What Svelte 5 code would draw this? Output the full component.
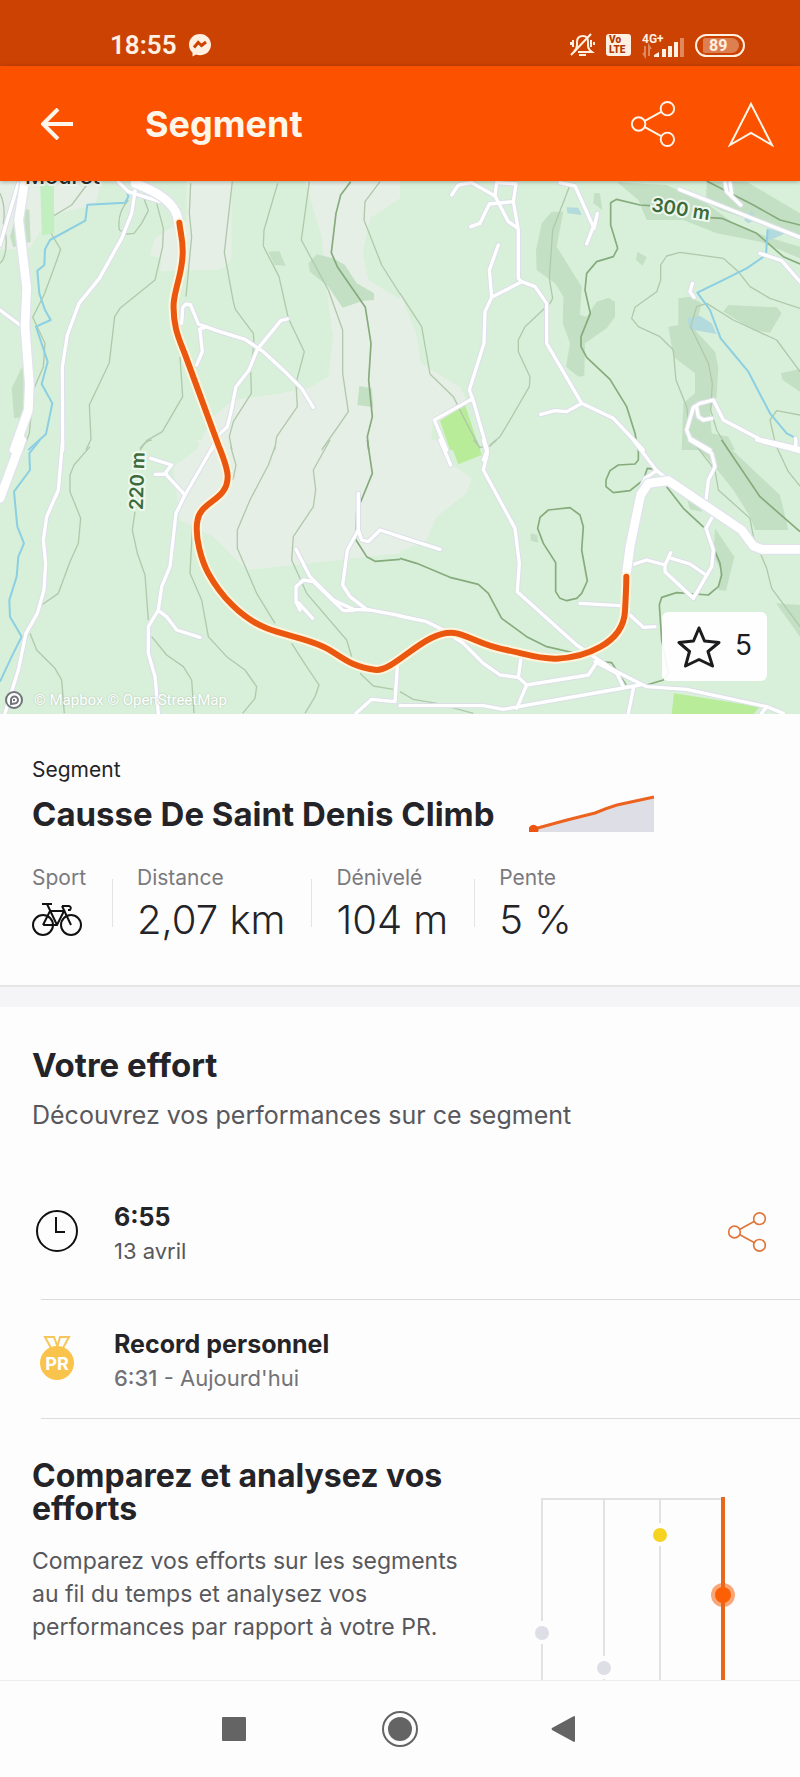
<script lang="ts">
  interface Tile {
    x: number;
    y: number;
    open: string;
    wood: string;
    park: string;
    contour: string;
    index: string;
    lake: string;
    river: string;
    road: string;
    main: string;
  }

  // The map is 2400 x 1599 units, cut in four tiles that overlap a little.
  const tiles: Tile[] = [
    {
      x: 0,
      y: -33,
      open: 'M0 30H305L285 105 150 135 90 235 0 240ZM560 30H695V250Q690 300 640 300L480 303 485 265 450 255 465 205 500 180 560 150ZM915 30H1200V85L1110 145 1088 250 1105 330 1200 388V840H590L640 740 700 690 830 672 930 652 985 620 1000 500 985 400 965 200Z',
      wood: 'M925 280L950 253 1000 265 1035 285 1070 340 1122 370V390L1090 392 1028 413 985 350 930 305ZM805 245L838 243 857 287 823 285ZM1078 648L1115 655 1120 712 1072 705ZM35 655L66 590 80 640 75 740 42 745ZM55 110L88 120 92 215 40 232 30 200Z',
      park: '',
      contour: 'M260 45L215 105 148 145 138 165 182 238 160 300 132 375 98 442 135 520 130 590 100 660 88 790 70 840M385 90Q350 130 358 180L380 192 402 190 425 160 445 122 430 80M470 100L490 175 488 230 465 330 360 415 344 440 328 578 268 705 273 808 258 840M572 40L568 130 575 200 558 380M540 560L548 680 487 785 440 812 420 840M697 35L673 248 700 395 706 418 760 490 762 520 752 600 754 670 700 755 688 800 696 840M833 40L792 180 790 228 837 320 865 445 913 545 888 640 892 710 830 800 824 840M928 35L904 210 985 360 1028 480 1028 610 1045 725 965 840M1140 35L1095 95 1092 150 1145 285 1200 372M0 70Q18 110 10 160L18 200Q22 260 0 280',
      index: 'M1052 35L1022 75 1008 130 994 248 1012 290 1096 412 1113 520 1106 630 1117 740 1102 800 1106 840',
      lake: '',
      river: 'M375 50L385 80 375 98 262 104 256 152 150 210 135 238 133 285 112 302 118 370 135 420 152 450 108 470 143 575 125 642 157 700 138 792 85 840',
      road: 'M408 45L395 130 365 205 298 325 237 400 202 495 187 590 188 840M355 35L385 65 480 95M55 40L28 130 0 225M0 420L60 465M545 460L548 412 558 402 572 405 595 462 650 482 735 508 790 545 860 610 905 655 940 712M600 480L607 545 590 585M598 478L620 470M862 447L842 452 772 538 747 600 708 650 692 730 682 770 655 795 635 840',
      main: 'M75 30L56 150 80 355 75 470 88 640 85 720 42 840M405 40Q540 90 535 165'
    },
    {
      x: 1200,
      y: -33,
      open: 'M0 370L48 490 62 580 180 652 200 690 100 750 90 840H0Z',
      wood: 'M425 160L455 125 490 125 470 230 545 350 540 435 560 440 590 395 625 383 645 395V440L620 475 555 520 553 618 535 620 498 590 510 520 488 460 490 380 465 340 410 300 408 240ZM582 70H600L607 120 580 100ZM712 245L740 262 728 287 708 270ZM650 35L700 40 800 45 920 100 1000 160 1100 200 1200 230V265L1080 215 950 190 850 150 740 150 715 90ZM920 35H1040L1200 130V205L1050 150 960 120 918 95ZM835 385L870 380 905 400 885 480 945 545 955 590 950 680 930 720 935 790 985 800 1005 840H845L850 700 885 670V610L820 560 805 470 835 465ZM970 425L985 405 1130 412 1145 430 1110 488 1060 480ZM1142 610L1200 597V665L1148 630Z',
      park: 'M120 752L195 705 240 840H150Z',
      contour: 'M508 50L458 180 448 325 458 385 450 400 375 470 355 510V545L390 620 388 650 330 750 300 800 270 825M0 370L65 470 90 612 160 680 200 760 240 835M1200 415L1110 385 1050 350 1015 305 970 265 840 247 800 258 782 285V330L770 365 705 412 695 445 715 470 780 500 820 540 828 630 860 710 865 750M1200 605L1130 510 1000 450 920 400 890 410 872 470 925 580 937 640 932 720 950 780 985 840M1200 735L1130 722 1110 750 1125 815',
      index: 'M750 107L720 105 650 88 632 98 632 165 653 235 640 260 590 275 560 310 555 360 571 430 543 500V530L560 562 630 628 680 710 705 790 715 840M930 143L965 145 1070 190 1150 260 1200 282M920 33L1060 105 1140 150 1200 165',
      lake: 'M500 112L535 113 545 135 502 130ZM862 445L900 437 935 460 950 492 868 478ZM1032 150L1055 120 1065 150 1045 160ZM1100 175L1160 188 1100 215Z',
      river: 'M1103 180L1098 255 1040 295 960 335 892 368 930 420 962 505 1045 605 1110 730 1160 790 1185 803',
      road: 'M155 75L175 45 215 38 245 55 285 78 325 155 350 172M290 38L285 78M292 38L348 42 340 95 355 180 355 325 365 335 405 350 440 400 440 520 545 700 640 745 730 840M340 95L268 102 240 160 212 170M295 225L268 300 275 382M365 335L275 382 255 425 252 520 208 660 218 686 103 750 140 840M218 686L262 840 250 870M545 700L500 725 465 722 422 733M480 38L525 48 580 170 560 222M525 48L582 175 592 130M838 58L1200 202M975 38L980 65 1022 105M990 38L995 70M1080 250L1145 272 1200 335M877 340L870 365 882 382M1200 835L1080 808 970 750 940 690 900 700 880 712 860 780 870 805 930 840M890 712L895 740 910 750 935 745M1187 805V840',
      main: ''
    },
    {
      x: 0,
      y: 777,
      open: 'M600 20L520 80 540 240 640 290 740 390 1200 340V0H590Z',
      wood: '',
      park: '',
      contour: 'M270 20L222 75 210 105V155L242 235 235 310 210 365 175 460 125 495M90 580L110 630 165 685 185 720 193 820M405 215L397 270 412 340 435 405 445 540M420 25Q440 0 455 0M455 590L500 645 550 680 575 720 582 820M692 20L708 75 700 115 640 185 600 200 578 250 570 400 605 480 625 590 680 650 735 690 770 740 765 775 728 820M825 20L805 75 750 180 712 270V325L770 460 825 550M875 610L910 665 957 735 945 770 915 820M990 0L940 90 947 150 940 200 880 290 875 360 920 460 1040 600 1055 650M1080 700L1120 738 1180 748M80 0L60 40',
      index: 'M1102 0L1117 100 1070 215 1068 300 1100 350 1125 364 1200 358',
      lake: '',
      river: 'M120 0L88 40 90 90 42 155 52 260 72 310 55 350 50 410 28 480 30 530 65 590 35 650 0 725',
      road: 'M188 0L175 150 140 230 130 300 137 370 132 450 112 520 78 580 55 690 15 820M650 0L555 165 528 220 510 380 485 440 475 510 445 560V640L465 710 475 820M452 55L515 75 495 100 555 165M465 103L500 102M475 512L500 530 530 570 600 592M1075 160V270L1042 330 1028 435 1050 470 1100 508 1200 527M1075 270L1085 300 1105 305 1140 270 1200 290M888 328L930 410 960 440 1000 480 1060 508 1110 510M1060 512L1030 512 940 425 910 420 888 440V485L900 510M895 488L938 535M1192 680L1185 785 1115 778 1068 820',
      main: 'M65 0L0 175'
    },
    {
      x: 1200,
      y: 777,
      open: 'M0 0H110L160 75 215 115 200 160 110 230 80 300 0 335Z',
      wood: 'M860 0H965L1140 165 1165 270H1065L1050 230 1000 150 920 50ZM945 265L1003 350 978 452 955 450 962 390 940 345ZM862 182L905 190V215L870 208ZM1128 490L1200 495V590ZM392 280L412 285 415 308 392 302Z',
      park: 'M148 0H232L245 45 175 73ZM822 760L1080 800 1060 822H815Z',
      contour: 'M220 0L240 22 270 18 290 0M875 0L945 90 955 150 1050 235 1060 290 1100 385 1115 445 1200 560M1120 0L1165 95 1200 138M0 755L40 778 110 790 220 820',
      index: 'M0 355L50 370 150 412 235 433 265 460 305 535 380 590 440 620 550 645M715 25V60L705 72 655 75 630 92 618 120V140L640 158 690 152 730 120 742 85 770 88M510 203L445 210 420 232 413 265 430 310 467 368V455L480 475 500 482 530 475 545 460 562 423 545 330 550 260 540 225ZM800 140L850 205 918 268 960 370 965 405 955 440 925 465 830 458 785 472 778 495 785 600 805 700 790 720 740 735M600 665L635 668 680 738M965 0L1080 170 1200 275',
      lake: '',
      river: '',
      road: 'M250 0L262 40 250 90 345 265 358 370 352 455 530 615 640 690 740 740 860 748 1100 800 1150 820M120 0L152 75M0 290L120 328M0 528L80 545 130 570 190 610 250 670 300 705 355 712 380 735 565 705 585 675M362 660L355 712M380 735L350 805M0 797H250L310 808 720 735M700 745L685 820M585 665L650 700 670 740M1100 800L1085 820M540 490L660 497M690 525L730 562 765 560M700 373L740 360 795 375V395L880 475 935 380 940 330 918 265 940 225 918 180 925 120 945 80 935 40 870 0M812 338L795 375M805 352L870 372 918 405M700 0L770 92 800 115M770 92L735 115 720 150M1070 0L1200 35M1187 0V30',
      main: 'M680 395L690 320 722 165 745 130 805 122 1025 270 1060 318 1085 328H1200'
    }
  ];

  const bands: [keyof Tile, string][] = [
    ['open', 'open'],
    ['wood', 'wood'],
    ['park', 'park'],
    ['lake', 'lake'],
    ['contour', 'contour'],
    ['index', 'contour index'],
    ['river', 'river'],
    ['road', 'road-case'],
    ['road', 'road'],
    ['main', 'main-case'],
    ['main', 'main']
  ];

  const route =
    'M538 125C542 160 550 180 548 220C546 280 525 320 521 367C518 440 540 480 555 520L655 792C670 830 683 860 683 887C683 960 600 960 592 1020C584 1070 605 1140 625 1177C660 1240 720 1310 800 1342C860 1365 910 1370 970 1397C1020 1420 1040 1455 1130 1467C1190 1467 1280 1340 1370 1357C1420 1370 1450 1395 1520 1407C1580 1420 1620 1435 1670 1433C1750 1430 1870 1390 1875 1290C1877 1250 1879 1220 1879 1187';

  const stats = [
    { label: 'Distance', value: '2,07 km' },
    { label: 'Dénivelé', value: '104 m' },
    { label: 'Pente', value: '5 %' }
  ];

  let stars = $state(5);
  let starred = $state(false);

  function toggleStar() {
    starred = !starred;
    stars += starred ? 1 : -1;
  }
</script>

{#snippet shareIcon()}
  <svg class="share" viewBox="0 0 48 48" aria-hidden="true">
    <circle cx="9" cy="24" r="7" />
    <circle cx="39" cy="8" r="7" />
    <circle cx="39" cy="40" r="7" />
    <path d="M15 21L33 11M15 27L33 37" />
  </svg>
{/snippet}

<div class="screen">
  <div class="status">
    <span class="clock">18:55</span>
    <svg class="messenger" viewBox="0 0 24 24" aria-hidden="true">
      <path class="solid" d="M12 1C5.500 1 1 5.800 1 11.800c0 3.200 1.300 5.900 3.500 7.800v4l3.600-2c1.200.4 2.500.6 3.900.6 6.500 0 11-4.600 11-10.400S18.500 1 12 1z" />
      <path class="bolt" d="M6 14.500L10.200 9.500 13.500 12.500 18 9" />
    </svg>
    <span class="spacer"></span>
    <svg class="bell" viewBox="0 0 26 24" aria-hidden="true">
      <path d="M5 19Q8 16 8 12V9c0-4 2-6 6-6 3 0 5 2 5 6v4q0 3 4 6H9M4 7v7M2 9v3M22 7v7M25 9v3" />
      <path d="M10 22h7M2 22L22 1" />
    </svg>
    <span class="volte"><b>Vo</b><b>LTE</b></span>
    <span class="signal">
      <b>4G+</b>
      <svg viewBox="0 0 42 15" aria-hidden="true">
        <path class="dim line" d="M3 4V14L1 11M7 14V4L9 7" />
        <path class="solid" d="M12 15V13L17 10V15zM20 7h4v8h-4zM26 4h4v11h-4zM32 0h4v15h-4z" />
        <path class="dim" d="M38 -4h4v19h-4z" />
      </svg>
    </span>
    <span class="battery"><span class="level">89</span></span>
  </div>

  <header class="appbar">
    <button type="button" aria-label="Retour">
      <svg class="back" viewBox="0 0 32 32" aria-hidden="true"><path d="M32 16H2M17 1L2 16 17 31" /></svg>
    </button>
    <h1>Segment</h1>
    <button type="button" aria-label="Partager">{@render shareIcon()}</button>
    <button type="button" aria-label="Itinéraire">
      <svg class="compass" viewBox="0 0 46 48" aria-hidden="true"><path d="M23 4L44 45 23 33 2 45Z" /></svg>
    </button>
  </header>

  <section class="map">
    <svg viewBox="0 0 2400 1599" role="img" aria-label="Carte du segment">
      {#each bands as [key, name]}
        {#each tiles as tile}
          {#if tile[key]}
            <path class={name} d={`${tile[key]}`} transform={`translate(${tile.x} ${tile.y})`} />
          {/if}
        {/each}
      {/each}
      <path class="lawn" d="M120 0H162V157L126 163Z" />
      <path class="route-case" d={route} />
      <path class="route" d={route} />
      <text class="place" x="75" y="9">Mouret</text>
      <text class="height" transform="translate(1952 90) rotate(9)">300 m</text>
      <text class="height" transform="translate(428 988) rotate(-88)">220 m</text>
    </svg>
    <div class="credits">
      <svg viewBox="0 0 18 18" aria-hidden="true">
        <circle cx="9" cy="9" r="8" />
        <path d="M6 13V9a3.500 3.500 0 1 1 3.500 3.500zM9 8v2" />
      </svg>
      <span>© Mapbox © OpenStreetMap</span>
    </div>
    <button type="button" class="star" aria-pressed={starred} onclick={toggleStar}>
      <svg viewBox="0 0 44 42" aria-hidden="true">
        <path d="M22 2L27.500 15 42 16.500 31 25.500 35.500 40 22 33.500 8.500 40 12.500 25.500 2 16.500 16.500 15Z" />
      </svg>
      <span>{stars}</span>
    </button>
  </section>

  <section class="summary">
    <p class="kind">Segment</p>
    <div class="name">
      <h2>Causse De Saint Denis Climb</h2>
      <svg class="profile" viewBox="0 0 126 38" aria-hidden="true">
        <path class="ground" d="M5 34L70 18 90 10 125 2V37H5Z" />
        <path class="slope" d="M5 34L38 25 66 18Q78 13 88 10L125 2" />
        <path class="dot" d="M0 37a5 5 0 1 1 9 0z" />
      </svg>
    </div>
    <dl class="stats">
      <div>
        <dt>Sport</dt>
        <dd>
          <svg class="bike" viewBox="0 0 50 34" role="img" aria-label="Vélo">
            <circle cx="11" cy="23" r="10" />
            <circle cx="39" cy="23" r="10" />
            <path d="M11 23L18 9H32L25 23H11M10 2H20M15 2L25 23M39 23L30 4M30 4H37Q40 5 38 8H36" />
          </svg>
        </dd>
      </div>
      {#each stats as stat}
        <div>
          <dt>{stat.label}</dt>
          <dd>{stat.value}</dd>
        </div>
      {/each}
    </dl>
  </section>

  <section class="effort">
    <h2>Votre effort</h2>
    <p class="lead">Découvrez vos performances sur ce segment</p>
    <ul>
      <li>
        <svg class="icon" viewBox="0 0 50 50" aria-hidden="true">
          <circle class="face" cx="25" cy="24" r="20" />
          <path class="face" d="M24 10V25H33" />
        </svg>
        <div class="detail">
          <strong>6:55</strong>
          <span>13 avril</span>
        </div>
        <button type="button" aria-label="Partager cet effort">{@render shareIcon()}</button>
      </li>
      <li>
        <svg class="icon" viewBox="0 0 50 50" aria-hidden="true">
          <path class="ribbon" d="M13 3H22L26 14H19ZM28 3H37L31 14H25Z" />
          <circle class="medal" cx="25" cy="29" r="17" />
          <text x="25" y="36">PR</text>
        </svg>
        <div class="detail">
          <strong>Record personnel</strong>
          <span class="quiet"><b>6:31</b> - Aujourd'hui</span>
        </div>
      </li>
    </ul>
  </section>

  <section class="compare">
    <div class="copy">
      <h2>Comparez et analysez vos efforts</h2>
      <p>Comparez vos efforts sur les segments au fil du temps et analysez vos performances par rapport à votre PR.</p>
    </div>
    <svg class="chart" viewBox="0 0 202 183" aria-hidden="true">
      <path class="grid" d="M8 124V2H188M8 147V183M70 2V159M70 182V183M126 2V26M126 49V183" />
      <circle class="past" cx="8" cy="136" r="7" />
      <circle class="past" cx="70" cy="171" r="7" />
      <circle class="best" cx="126" cy="38" r="7" />
      <circle class="halo" cx="189" cy="98" r="12" />
      <path class="now" d="M189 0V183" />
      <circle class="current" cx="189" cy="98" r="8" />
    </svg>
  </section>

  <nav class="system">
    <button type="button" aria-label="Applications récentes">
      <svg viewBox="0 0 36 36" aria-hidden="true"><rect x="4" y="6" width="24" height="24" rx="1" /></svg>
    </button>
    <button type="button" aria-label="Accueil">
      <svg viewBox="0 0 36 36" aria-hidden="true">
        <circle class="ring" cx="18" cy="18" r="17" />
        <circle cx="18" cy="18" r="12" />
      </svg>
    </button>
    <button type="button" aria-label="Précédent">
      <svg viewBox="0 0 36 36" aria-hidden="true"><path d="M6 17L28 5Q29 5 29 6V30Q29 31 28 31L6 19Q5 18 6 17Z" /></svg>
    </button>
  </nav>
</div>

<style>
  :global(body) {
    margin: 0;
    background: #fdfdfd;
  }

  .screen {
    display: flex;
    flex-direction: column;
    min-height: 100vh;
    font-family: Inter, "Liberation Sans", sans-serif;
    color: #242428;
  }

  h1,
  h2,
  p,
  ul,
  dl,
  dd {
    margin: 0;
    padding: 0;
  }

  button {
    display: flex;
    align-items: center;
    justify-content: center;
    padding: 0;
    border: 0;
    background: none;
    color: inherit;
    font: inherit;
    cursor: pointer;
  }

  svg {
    display: block;
    fill: none;
    stroke: currentColor;
  }

  .status {
    display: flex;
    align-items: center;
    gap: 11px;
    box-sizing: border-box;
    height: 66px;
    padding: 24px 55px 0 110px;
    background: #cb4202;
    color: #fff0e2;
    font-family: Roboto, sans-serif;
  }

  .clock {
    font-size: 26px;
    line-height: 32px;
    font-weight: 600;
  }

  .spacer {
    flex: 1;
  }

  .solid {
    fill: currentColor;
    stroke: none;
  }

  .messenger {
    width: 24px;
  }

  .bolt {
    stroke: #cb4202;
    stroke-width: 3;
  }

  .bell {
    width: 26px;
    stroke-width: 2;
  }

  .volte {
    display: flex;
    flex-direction: column;
    box-sizing: border-box;
    width: 25px;
    height: 22px;
    padding: 1px 3px;
    border-radius: 3px;
    background: #fff0e2;
    color: #b03a04;
    font-size: 10px;
    line-height: 10px;
  }

  .volte b {
    font-weight: 900;
  }

  .signal {
    display: flex;
    flex-direction: column;
    font-size: 12px;
    line-height: 10px;
  }

  .signal b {
    height: 8px;
    font-weight: 700;
  }

  .signal svg {
    width: 42px;
    overflow: visible;
  }

  .dim {
    fill: currentColor;
    stroke: none;
    opacity: 0.4;
  }

  .line {
    fill: none;
    stroke: currentColor;
    stroke-width: 2;
  }

  .battery {
    box-sizing: border-box;
    width: 50px;
    height: 23px;
    padding: 2px 2px 2px 6px;
    border: 2px solid #fff0e2;
    border-radius: 12px;
  }

  .level {
    display: block;
    width: 36px;
    padding-left: 6px;
    box-sizing: border-box;
    border-radius: 2px 8px 8px 2px;
    background: #dd7f50;
    font-size: 16px;
    line-height: 15px;
    font-weight: 700;
  }

  .appbar {
    position: relative;
    z-index: 1;
    display: flex;
    align-items: center;
    gap: 52px;
    box-sizing: border-box;
    height: 115px;
    padding: 0 26px 0 41px;
    background: #fc5200;
    box-shadow: 0 1px 4px rgba(0, 0, 0, 0.3);
    color: #fff6ea;
  }

  .appbar h1 {
    flex: 1;
    margin-left: 20px;
    font-size: 36px;
    line-height: 44px;
    font-weight: 700;
  }

  .back {
    width: 32px;
    stroke-width: 4;
  }

  .share {
    width: 46px;
    stroke-width: 2;
  }

  .compass {
    width: 46px;
    stroke-width: 2;
  }

  .map {
    position: relative;
    background: #d8f0d9;
  }

  .map > svg {
    width: 100%;
    height: auto;
    stroke: none;
  }

  .open { fill: #e6efe6; }
  .wood { fill: #c4e0c4; }
  .park { fill: #b8ec98; }
  .lawn { fill: #c1efc0; }
  .lake { fill: #b3dbdd; }

  .contour {
    stroke: #b0c9ab;
    stroke-width: 4;
    stroke-linejoin: round;
  }

  .index {
    stroke: #86ab7c;
    stroke-width: 5;
  }

  .river {
    stroke: #8ccfe3;
    stroke-width: 6;
    stroke-linejoin: round;
  }

  .road,
  .road-case,
  .main,
  .main-case,
  .route,
  .route-case {
    stroke: #ffffff;
    stroke-width: 10;
    stroke-linejoin: round;
    stroke-linecap: round;
  }

  .road-case {
    stroke: #dcdfea;
    stroke-width: 16;
  }

  .main {
    stroke-width: 26;
  }

  .main-case {
    stroke: #e0e3ec;
    stroke-width: 34;
  }

  .route {
    stroke: #ea580f;
    stroke-width: 18;
  }

  .route-case {
    stroke: #fff4dd;
    stroke-width: 30;
  }

  .map text {
    font-weight: 500;
    stroke: #eef8ee;
    stroke-width: 12;
    paint-order: stroke;
  }

  .place {
    fill: #2c2c2c;
    font-size: 66px;
  }

  .map .height {
    fill: #3b6b3b;
    font-size: 57px;
    font-weight: 600;
  }

  .credits {
    position: absolute;
    left: 5px;
    bottom: 5px;
    display: flex;
    align-items: center;
    gap: 11px;
    color: #ffffff;
    font-family: Roboto, sans-serif;
    font-size: 15px;
    line-height: 18px;
    text-shadow: 0 0 2px #a9b8aa;
  }

  .credits svg {
    width: 18px;
    color: #70757a;
    fill: #ffffff;
    stroke-width: 2;
  }

  .star {
    position: absolute;
    right: 33px;
    bottom: 33px;
    gap: 14px;
    width: 105px;
    height: 69px;
    border-radius: 6px;
    background: rgba(255, 255, 255, 0.93);
    color: #1c1c1e;
    font-size: 28px;
    line-height: 36px;
  }

  .star span {
    padding-bottom: 4px;
  }

  .star svg {
    width: 44px;
    stroke-width: 3;
    stroke-linejoin: round;
  }

  .summary {
    padding: 42px 32px 37px;
    border-bottom: 2px solid #e6e6e6;
  }

  .kind {
    font-size: 21px;
    line-height: 28px;
  }

  .name {
    display: flex;
    align-items: center;
    gap: 34px;
  }

  h2 {
    font-size: 32px;
    line-height: 60px;
    font-weight: 700;
  }

  .name h2,
  .effort h2 {
    font-size: 33px;
  }

  .profile {
    width: 126px;
  }

  .ground {
    fill: #dedee6;
    stroke: none;
  }

  .slope {
    stroke: #ec6320;
    stroke-width: 3;
  }

  .dot {
    fill: #ec5510;
    stroke: none;
  }

  .stats {
    display: flex;
    margin-top: 20px;
  }

  .stats div {
    display: flex;
    flex-direction: column;
    margin-right: 26px;
  }

  .stats div + div {
    padding-left: 25px;
    background: linear-gradient(#e4e4e6, #e4e4e6) left 15px / 1px 48px no-repeat;
  }

  .stats dt {
    color: #7a7a7e;
    font-size: 21px;
    line-height: 28px;
  }

  .stats dd {
    font-size: 40px;
    line-height: 56px;
    font-weight: 300;
  }

  .bike {
    width: 50px;
    padding: 10px 0;
    stroke: #111111;
    stroke-width: 2;
  }

  .effort {
    padding: 28px 0 0 32px;
    border-top: 20px solid #f5f5f7;
  }

  .lead {
    color: #58585c;
    font-size: 25px;
    line-height: 40px;
  }

  .effort ul {
    margin: 30px 0 0 9px;
    padding: 0;
    list-style: none;
  }

  .effort li {
    display: flex;
    align-items: center;
    gap: 32px;
    box-sizing: border-box;
    height: 119px;
    padding-right: 33px;
    border-bottom: 1px solid #dcdcde;
  }

  .effort li:first-child {
    height: 135px;
  }

  .icon {
    width: 50px;
    margin-left: -9px;
    font-size: 18px;
    font-weight: 700;
    text-anchor: middle;
  }

  .face {
    stroke: #111111;
    stroke-width: 2;
  }

  .ribbon {
    stroke: #f5c65a;
    stroke-width: 2;
  }

  .medal {
    fill: #f9c34c;
    stroke: none;
  }

  .icon text {
    fill: #ffffff;
    stroke: none;
  }

  .detail {
    display: flex;
    flex: 1;
    flex-direction: column;
    padding-top: 3px;
    font-size: 22px;
    line-height: 34px;
  }

  .detail strong {
    font-size: 25px;
  }

  .detail span {
    color: #58585c;
  }

  .detail .quiet {
    color: #727276;
  }

  .quiet b {
    font-weight: 500;
  }

  .effort .share {
    width: 40px;
    color: #e0753a;
  }

  .compare {
    display: flex;
    justify-content: space-between;
    padding: 40px 64px 0 32px;
  }

  .copy {
    width: 440px;
    padding-bottom: 36px;
  }

  .copy h2 {
    line-height: 33px;
  }

  .copy p {
    margin-top: 20px;
    color: #58585c;
    font-size: 23px;
    line-height: 33px;
  }

  .chart {
    align-self: flex-end;
    width: 202px;
  }

  .grid {
    stroke: #e2e2e4;
    stroke-width: 2;
  }

  .past,
  .best,
  .current,
  .halo {
    fill: #dedee6;
    stroke: none;
  }

  .best {
    fill: #f5d320;
  }

  .now {
    stroke: #e8681c;
    stroke-width: 4;
  }

  .halo {
    fill: #f8a878;
  }

  .current {
    fill: #fc5f04;
  }

  .system {
    display: flex;
    justify-content: center;
    gap: 128px;
    box-sizing: border-box;
    height: 96px;
    border-top: 1px solid #eeeeee;
    color: #646464;
  }

  .system svg {
    width: 36px;
    fill: currentColor;
    stroke: none;
  }

  .system .ring {
    fill: none;
    stroke: currentColor;
    stroke-width: 2;
  }
</style>
